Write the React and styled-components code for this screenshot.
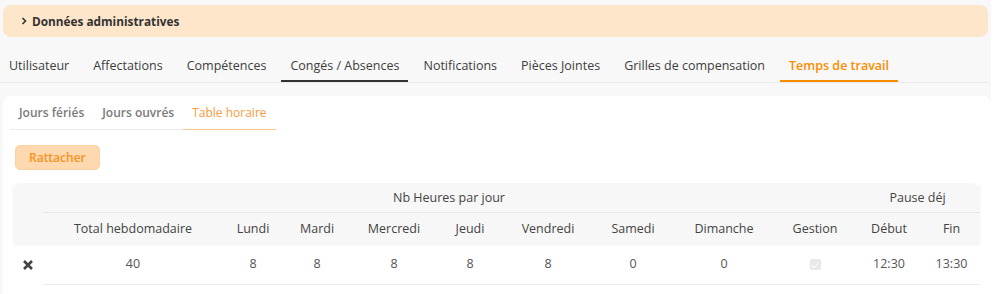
import React from "react";
import styled, { createGlobalStyle } from "styled-components";

const Global = createGlobalStyle`
  html, body { margin: 0; padding: 0; background: #ffffff; }
  body { font-family: "Open Sans", "Noto Sans", sans-serif; color: #444; }
  * { box-sizing: border-box; }
`;

const Page = styled.div`
  width: 991px;
  min-height: 294px;
  background: #f8f8f8;
  padding: 5px 0 0 3px;
`;

const Accordion = styled.div`
  width: 985px;
  height: 32px;
  background: #fee6cb;
  border-radius: 8px;
  display: flex;
  align-items: center;
  padding-left: 18px;
  gap: 5px;
  font-size: 11.8px;
  font-weight: 700;
  color: #333;
`;

const Chevron = styled.svg`
  width: 6px;
  height: 8px;
`;

const TabBar = styled.nav`
  display: flex;
  gap: 6px;
  margin-top: 14px;
  margin-left: -3px;
  border-bottom: 1px solid #e9e9e9;
  width: 988px;
`;

const Tab = styled.div`
  height: 31px;
  padding: 6px 9px 0;
  font-size: 12.5px;
  color: ${(p) => (p.$active === "orange" ? "#fb8c00" : "#3d3d3d")};
  font-weight: ${(p) => (p.$active === "orange" ? 600 : 400)};
  border-bottom: 2px solid
    ${(p) =>
      p.$active === "orange" ? "#fb8c00" : p.$active === "dark" ? "#333" : "transparent"};
  white-space: nowrap;
`;

const Card = styled.div`
  margin-top: 13px;
  width: 988px;
  background: #fff;
  border-radius: 8px 8px 0 0;
  padding: 0 0 9px 7px;
  min-height: 199px;
`;

const SubTabs = styled.div`
  display: flex;
  width: 267px;
  border-bottom: 1px solid #ececec;
`;

const SubTab = styled.div`
  height: 34px;
  display: flex;
  align-items: center;
  padding: 0 9px;
  font-size: 12px;
  font-weight: ${(p) => (p.$active ? 500 : 600)};
  color: ${(p) => (p.$active ? "#fb9a3c" : "#7a7a7a")};
  border-bottom: 1px solid ${(p) => (p.$active ? "#fcc68c" : "transparent")};
  margin-bottom: -1px;
  white-space: nowrap;
`;

const Button = styled.button`
  margin: 15px 0 0 5px;
  height: 25px;
  padding: 0 13px;
  background: #fed8ae;
  border: 1px solid #fcd2a3;
  border-radius: 5px;
  color: #f7931e;
  font-family: inherit;
  font-size: 12px;
  font-weight: 600;
`;

const TableWrap = styled.div`
  margin: 13px 0 0 3px;
  width: 967px;
`;

const Table = styled.table`
  width: 967px;
  border-collapse: separate;
  border-spacing: 0;
  table-layout: fixed;
  font-size: 12.5px;
`;

const THead = styled.thead`
  background: #f7f7f7;
  box-shadow: 0 2px 3px rgba(0, 0, 0, 0.05);
`;

const Th = styled.th`
  height: 30px;
  font-weight: 400;
  color: #444;
  text-align: center;
  padding: 0;
  border-bottom: ${(p) => (p.$line ? "1px solid #e6e6e6" : "none")};
  border-top-left-radius: ${(p) => (p.$tl ? "8px" : "0")};
  border-top-right-radius: ${(p) => (p.$tr ? "8px" : "0")};
  white-space: nowrap;
`;

const Td = styled.td`
  height: 42px;
  text-align: center;
  color: #555;
  padding: 0;
  border-bottom: 1px solid #ececec;
  &:first-child { border-bottom: none; }
`;

const Check = styled.span`
  display: inline-block;
  width: 11px;
  height: 11px;
  border-radius: 2px;
  background: #e8e8e8;
  position: relative;
  vertical-align: middle;
  &::after {
    content: "";
    position: absolute;
    left: 3.5px;
    top: 1.5px;
    width: 3px;
    height: 6px;
    border: solid #fff;
    border-width: 0 1.5px 1.5px 0;
    transform: rotate(45deg);
  }
`;

const Cross = styled.svg`
  width: 12px;
  height: 12px;
  vertical-align: middle;
  margin-left: -1px;
`;

const cols = [30, 180, 60, 68, 86, 66, 90, 80, 102, 80, 68, 57];
const days = ["Lundi", "Mardi", "Mercredi", "Jeudi", "Vendredi", "Samedi", "Dimanche"];
const values = ["8", "8", "8", "8", "8", "0", "0"];

export default function App() {
  const tabs = [
    ["Utilisateur"],
    ["Affectations"],
    ["Compétences"],
    ["Congés / Absences", "dark"],
    ["Notifications"],
    ["Pièces Jointes"],
    ["Grilles de compensation"],
    ["Temps de travail", "orange"],
  ];
  return (
    <>
      <Global />
      <Page>
        <Accordion>
          <Chevron viewBox="0 0 6 8">
            <path d="M1.5 1 L4.5 4 L1.5 7" stroke="#333" strokeWidth="1.6" fill="none" />
          </Chevron>
          Données administratives
        </Accordion>
        <TabBar>
          {tabs.map(([t, a]) => (
            <Tab key={t} $active={a}>
              {t}
            </Tab>
          ))}
        </TabBar>
        <Card>
          <SubTabs>
            <SubTab>Jours fériés</SubTab>
            <SubTab>Jours ouvrés</SubTab>
            <SubTab $active>Table horaire</SubTab>
          </SubTabs>
          <Button>Rattacher</Button>
          <TableWrap>
            <Table>
              <colgroup>
                {cols.map((w, i) => (
                  <col key={i} style={{ width: w }} />
                ))}
              </colgroup>
              <THead>
                <tr>
                  <Th rowSpan={2} $tl />
                  <Th colSpan={9} $line>
                    Nb Heures par jour
                  </Th>
                  <Th colSpan={2} $line $tr>
                    Pause déj
                  </Th>
                </tr>
                <tr>
                  <Th>Total hebdomadaire</Th>
                  {days.map((d) => (
                    <Th key={d}>{d}</Th>
                  ))}
                  <Th>Gestion</Th>
                  <Th>Début</Th>
                  <Th>Fin</Th>
                </tr>
              </THead>
              <tbody>
                <tr>
                  <Td>
                    <Cross viewBox="0 0 12 12">
                      <path d="M2 2 L10 10 M10 2 L2 10" stroke="#444" strokeWidth="2.6" strokeLinecap="butt" />
                    </Cross>
                  </Td>
                  <Td>40</Td>
                  {values.map((v, i) => (
                    <Td key={i}>{v}</Td>
                  ))}
                  <Td>
                    <Check />
                  </Td>
                  <Td>12:30</Td>
                  <Td>13:30</Td>
                </tr>
              </tbody>
            </Table>
          </TableWrap>
        </Card>
      </Page>
    </>
  );
}
